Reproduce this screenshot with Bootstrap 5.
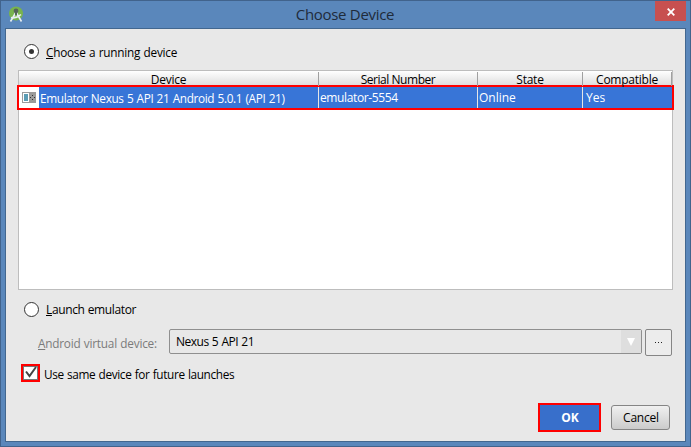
<!DOCTYPE html>
<html lang="en">
<head>
<meta charset="utf-8">
<title>Choose Device</title>
<link href="https://cdn.jsdelivr.net/npm/bootstrap@5.3.0/dist/css/bootstrap.min.css" rel="stylesheet">
<style>
body{font-family:"Open Sans","Noto Sans",sans-serif;font-size:12px;line-height:16px;color:#000;overflow:hidden}
.dialog{width:691px;height:447px;background:#5a87bb;border:1px solid #41638c;padding:0 4px 4px 4px}
.titlebar{height:27px}
.logo{margin:4px 0 0 3px}
.caption{font-size:15px;line-height:27px;color:#1f2b3a;letter-spacing:-.3px;padding-left:9px}
.close-btn{width:31px;height:20px;background:#c75050;border:0;padding:1px 0 0 1px}
.pane{height:414px;background:#e8e8e8;border:1px solid #42678f}
.opt{gap:7px;padding-left:18px;height:15px;margin-top:15px}
.opt span{padding-top:1px}
.launch{margin-top:12px}
.opt svg{display:block}
u{text-underline-offset:1px}
.devices{width:655px;height:220px;background:#fff;border:1px solid #bdbdbd;margin:11px 0 0 12px}
.cols{display:grid;grid-template-columns:300px 159px 105px 89px}
.heads{height:15px;background:linear-gradient(#fff,#dcdcdc);text-align:center;line-height:15px;letter-spacing:-.25px}
.heads>div{border-right:1px solid #a0a0a0;margin-top:1px;height:14px}
.picked{height:25px;margin:-1px -2px 0;border:2px solid #f00;background:#3875d7;color:#fff;line-height:22px}
.picked>div{border-right:1px solid #e6e6e6;padding-left:1px;white-space:nowrap;height:21px}
.picked>div:last-child{border:0;padding-left:3px}
.picked>.first{padding-left:0}
.ico{width:20px;height:21px;background:#fff;padding:5px 0 0 3px}
.ico svg{display:block}
.t-emu{padding-left:1px;font-size:11.8px;letter-spacing:-.35px;word-spacing:.55px}
.t-ser{letter-spacing:-.38px}
.t-sn{letter-spacing:-.46px}
.t-run{font-size:11.8px;letter-spacing:-.25px;word-spacing:.6px}
.t-launch{letter-spacing:-.36px;word-spacing:.3px}
.t-avd{font-size:11.8px;letter-spacing:-.22px;word-spacing:.5px}
.t-nex{letter-spacing:-.48px;word-spacing:.5px}
.t-use{font-size:11.8px;letter-spacing:-.35px;word-spacing:.5px}
.avd{margin:12px 0 0 32px;height:28px}
.avd label{width:131px;color:#7b7b7b;line-height:28px}
.combo{width:473px;height:25px;border:1px solid #8f8f8f;border-radius:2px;line-height:24px;padding-left:6px}
.arrow{width:20px;background:#dedede}
.dots{width:27px;height:27px;margin-left:3px;border:1px solid #858585;border-radius:2px;background:#ececec;gap:2px}
.dots i{width:1px;height:1px;background:#222}
.remember{margin:7px 0 0 15px;gap:4px}
.remember .t-use{padding-top:2px}
.tick{width:19px;height:18px;border:2px solid #f00;background:#fff}
.tick svg{display:block}
.actions{margin:21px 15px 0 0;gap:10px}
.ok-btn,.ok-btn:hover{width:63px;height:29px;border:2px solid #f00;border-radius:0;background:#386fcb;color:#fff;font-weight:700;font-size:12px;padding:0 0 0 1px;line-height:25px}
.cancel-btn{width:59px;height:25px;margin-top:2px;border:1px solid #858585;border-radius:3px;background:linear-gradient(#f0f0f0,#cbcbcb);font-size:12px;letter-spacing:-.2px;padding:0 0 0 1px;line-height:24px;color:#000}
</style>
<script src="https://cdn.jsdelivr.net/npm/bootstrap@5.3.0/dist/js/bootstrap.bundle.min.js"></script>
</head>
<body>
<div class="dialog">
  <div class="titlebar d-flex align-items-start">
    <svg class="logo" width="18" height="19" viewBox="0 0 18 19"><circle cx="8" cy="8.500" r="7" fill="#78b34e"/><circle cx="8" cy="6" r="2.400" fill="#56645a"/><path d="M7.500 8 2.500 16.500M8.500 8l5 8.500M3 12.500q5 1.500 10-3" stroke="#e8eef2" stroke-width="1.600" fill="none"/><path d="M8 5v5" stroke="#56645a" stroke-width="2"/></svg>
    <div class="caption flex-grow-1 text-center">Choose Device</div>
    <button class="close-btn d-flex align-items-center justify-content-center" aria-label="Close"><svg width="8" height="8" viewBox="0 0 8 8"><path d="M.7.7l6.600 6.600M7.300.7.7 7.300" stroke="#fff" stroke-width="1.800"/></svg></button>
  </div>
  <div class="pane">
    <div class="opt d-flex align-items-center">
      <svg width="15" height="15"><circle cx="7.500" cy="7.500" r="7" fill="#fff" stroke="#333"/><circle cx="7.500" cy="7.500" r="2.500" fill="#333"/></svg>
      <span class="t-run"><u>C</u>hoose a running device</span>
    </div>
    <div class="devices">
      <div class="cols heads"><div>Device</div><div class="t-sn">Serial Number</div><div>State</div><div>Compatible</div></div>
      <div class="cols picked">
        <div class="first d-flex"><span class="ico"><svg width="14" height="11"><rect width="14" height="11" fill="#9b9b9b"/><rect x="1" y="1" width="6" height="9" fill="#fff"/><rect x="2" y="2" width="4" height="7" fill="#5c9db5"/><path d="M10 3h1v1h-1zM8 5h1v1H8zM12 5h1v1h-1zM10 7h1v1h-1z" fill="#333"/></svg></span><span class="t-emu">Emulator Nexus 5 API 21 Android 5.0.1 (API 21)</span></div>
        <div><span class="t-ser">emulator-5554</span></div><div>Online</div><div>Yes</div>
      </div>
    </div>
    <div class="opt launch d-flex align-items-center">
      <svg width="15" height="15"><circle cx="7.500" cy="7.500" r="7" fill="#fff" stroke="#333"/></svg>
      <span class="t-launch"><u>L</u>aunch emulator</span>
    </div>
    <div class="avd d-flex align-items-start">
      <label><span class="t-avd"><u>A</u>ndroid virtual device:</span></label>
      <div class="combo d-flex justify-content-between"><span class="t-nex">Nexus 5 API 21</span><span class="arrow d-flex align-items-center justify-content-center"><svg width="8" height="8"><path d="M0 0h8L4 8z" fill="#fff"/></svg></span></div>
      <div class="dots d-flex align-items-center justify-content-center"><i></i><i></i><i></i></div>
    </div>
    <div class="remember d-flex align-items-center">
      <span class="tick"><svg width="15" height="14"><rect x=".5" y=".5" width="14" height="13" fill="#fff" stroke="#777"/><path d="M3 5.500 6.500 10 13 1" fill="none" stroke="#444" stroke-width="2"/></svg></span>
      <span class="t-use">Use same device for future launches</span>
    </div>
    <div class="actions d-flex justify-content-end align-items-start">
      <button class="btn ok-btn">OK</button><button class="btn cancel-btn">Cancel</button>
    </div>
  </div>
</div>
</body>
</html>
